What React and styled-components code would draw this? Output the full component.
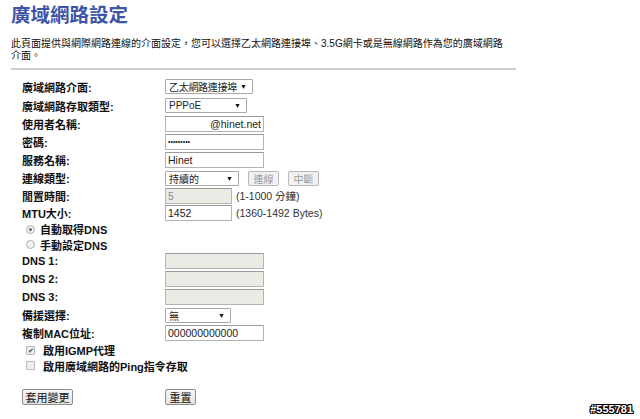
import React from 'react'
import styled, { createGlobalStyle } from 'styled-components'

const GlobalStyle = createGlobalStyle`
  body {
    margin: 0;
    background: #fff;
    font-family: "Liberation Sans", "Noto Sans CJK TC", sans-serif;
    color: #111;
  }
`

const Page = styled.div`
  position: relative;
  width: 640px;
  height: 419px;
  box-sizing: border-box;
  padding: 2px 0 0 11px;
  overflow: hidden;
`

const Title = styled.h1`
  margin: 0;
  font-size: 19.5px;
  line-height: 24px;
  font-weight: 700;
  color: #3d55a8;
  font-family: "Noto Sans CJK TC", sans-serif;
`

const Intro = styled.p`
  margin: 12px 0 0 0;
  font-size: 10px;
  line-height: 12px;
  font-family: "Liberation Sans", "Noto Sans CJK TC", sans-serif;
  color: #111;
`

const Divider = styled.div`
  width: 505px;
  margin-top: 6px;
  border-top: 2px solid #cfcfcf;
`

const Form = styled.div`
  padding: 7px 0 0 11px;
`

const Row = styled.div`
  display: grid;
  grid-template-columns: 143px auto;
  align-items: center;
  height: ${p => p.h}px;
`

const Label = styled.div`
  font-size: 11px;
  font-weight: 700;
  font-family: "Liberation Sans", "Noto Sans CJK TC", sans-serif;
  white-space: nowrap;
`

const Field = styled.div`
  display: flex;
  align-items: center;
  gap: ${p => p.gap || 4}px;
`

const Select = styled.div`
  display: inline-flex;
  align-items: center;
  justify-content: space-between;
  box-sizing: border-box;
  width: ${p => p.w}px;
  height: 15px;
  padding: 0 5px 0 3px;
  border: 1px solid #a8a8a8;
  border-radius: 1px;
  background: #fff;
  font-size: 10px;
  letter-spacing: ${p => p.tight ? '-0.3px' : '0'};
  color: #222;
  white-space: nowrap;
  overflow: hidden;
  font-family: "Liberation Sans", "Noto Sans CJK TC", sans-serif;
  &::after {
    content: "▼";
    font-size: 7px;
    letter-spacing: 0;
    color: #111;
  }
`

const TextInput = styled.input`
  box-sizing: border-box;
  width: ${p => p.w || 99}px;
  height: 16px;
  margin: 0;
  padding: 0 2px;
  border: 1px solid #b4b4b4;
  border-top-color: #9a9a9a;
  background: ${p => (p.disabled ? '#ebebe6' : '#fff')};
  font-size: ${p => (p.type === 'password' ? 7 : 10.5)}px;
  font-family: "Liberation Sans", "Noto Sans CJK TC", sans-serif;
  color: #222;
  text-align: ${p => (p.right ? 'right' : 'left')};
  outline: none;
  &:disabled { color: #8a8a8a; }
`

const Hint = styled.span`
  font-size: 10.5px;
  color: #333;
  font-family: "Liberation Sans", "Noto Sans CJK TC", sans-serif;
`

const SmallButton = styled.span`
  display: inline-flex;
  align-items: center;
  justify-content: center;
  box-sizing: border-box;
  width: 31px;
  height: 15px;
  border: 1px solid #b8b8b8;
  border-radius: 2px;
  background: #f2f2f2;
  color: #9a9a9a;
  font-size: 10px;
  font-family: "Noto Sans CJK TC", sans-serif;
`

const Choice = styled.div`
  display: flex;
  align-items: center;
  gap: ${p => p.gap}px;
  padding-left: 4px;
  height: ${p => p.h}px;
  font-size: 11px;
  font-weight: 700;
  font-family: "Liberation Sans", "Noto Sans CJK TC", sans-serif;
`

const Radio = styled.span`
  position: relative;
  width: 7px;
  height: 7px;
  border-radius: 50%;
  border: 1px solid #b0b0b0;
  background: #f0f0f0;
  &::after {
    content: "";
    display: ${p => (p.checked ? 'block' : 'none')};
    position: absolute;
    left: 2px;
    top: 2px;
    width: 3px;
    height: 3px;
    border-radius: 50%;
    background: #666;
  }
`

const Check = styled.span`
  display: inline-flex;
  align-items: center;
  justify-content: center;
  width: 7px;
  height: 7px;
  border: 1px solid #b8b8b8;
  border-radius: 1px;
  background: #f0f0f0;
  font-size: 7px;
  line-height: 7px;
  color: #666;
`

const Actions = styled.div`
  display: grid;
  grid-template-columns: 143px auto;
  margin-top: 15px;
`

const Button = styled.span`
  display: inline-flex;
  align-items: center;
  justify-content: center;
  box-sizing: border-box;
  width: ${p => p.w}px;
  height: 16px;
  border: 1px solid #8f8f8f;
  border-radius: 2px;
  background: linear-gradient(#f6f6f6, #e4e4e4);
  font-size: 11px;
  color: #111;
  font-family: "Noto Sans CJK TC", sans-serif;
`

const Watermark = styled.div`
  position: absolute;
  right: 7px;
  bottom: 4px;
  font-size: 11px;
  font-weight: 700;
  color: #fff;
  font-family: "Liberation Sans", sans-serif;
  text-shadow: 1px 0 0 #000, -1px 0 0 #000, 0 1px 0 #000, 0 -1px 0 #000,
    1px 1px 0 #000, -1px -1px 0 #000, 1px -1px 0 #000, -1px 1px 0 #000;
`

export default function App() {
  return (
    <Page>
      <GlobalStyle />
      <Title>廣域網路設定</Title>
      <Intro>
        此頁面提供與網際網路連線的介面設定，您可以選擇乙太網路連接埠、3.5G網卡或是無線網路作為您的廣域網路
        <br />
        介面。
      </Intro>
      <Divider />
      <Form>
        <Row h={19}>
          <Label>廣域網路介面:</Label>
          <Field><Select w={88} tight>乙太網路連接埠</Select></Field>
        </Row>
        <Row h={19}>
          <Label>廣域網路存取類型:</Label>
          <Field><Select w={82}>PPPoE</Select></Field>
        </Row>
        <Row h={18}>
          <Label>使用者名稱:</Label>
          <Field><TextInput right readOnly value="@hinet.net" /></Field>
        </Row>
        <Row h={17}>
          <Label>密碼:</Label>
          <Field><TextInput type="password" readOnly value="123456789" /></Field>
        </Row>
        <Row h={19}>
          <Label>服務名稱:</Label>
          <Field><TextInput readOnly value="Hinet" /></Field>
        </Row>
        <Row h={18}>
          <Label>連線類型:</Label>
          <Field gap={9}>
            <Select w={74}>持續的</Select>
            <SmallButton>連線</SmallButton>
            <SmallButton>中斷</SmallButton>
          </Field>
        </Row>
        <Row h={17}>
          <Label>閒置時間:</Label>
          <Field>
            <TextInput w={67} disabled value="5" />
            <Hint>(1-1000 分鐘)</Hint>
          </Field>
        </Row>
        <Row h={17}>
          <Label>MTU大小:</Label>
          <Field>
            <TextInput w={67} readOnly value="1452" />
            <Hint>(1360-1492 Bytes)</Hint>
          </Field>
        </Row>
        <Choice h={16} gap={5}><Radio checked />自動取得DNS</Choice>
        <Choice h={15} gap={5}><Radio />手動設定DNS</Choice>
        <Row h={18}>
          <Label>DNS 1:</Label>
          <Field><TextInput disabled value="" /></Field>
        </Row>
        <Row h={18}>
          <Label>DNS 2:</Label>
          <Field><TextInput disabled value="" /></Field>
        </Row>
        <Row h={18}>
          <Label>DNS 3:</Label>
          <Field><TextInput disabled value="" /></Field>
        </Row>
        <Row h={18}>
          <Label>備援選擇:</Label>
          <Field><Select w={66}>無</Select></Field>
        </Row>
        <Row h={18}>
          <Label>複制MAC位址:</Label>
          <Field><TextInput readOnly value="000000000000" /></Field>
        </Row>
        <Choice h={16} gap={8}><Check>✔</Check>啟用IGMP代理</Choice>
        <Choice h={15} gap={8}><Check />啟用廣域網路的Ping指令存取</Choice>
        <Actions>
          <div><Button w={51}>套用變更</Button></div>
          <div><Button w={31}>重置</Button></div>
        </Actions>
      </Form>
      <Watermark>#555781</Watermark>
    </Page>
  )
}
